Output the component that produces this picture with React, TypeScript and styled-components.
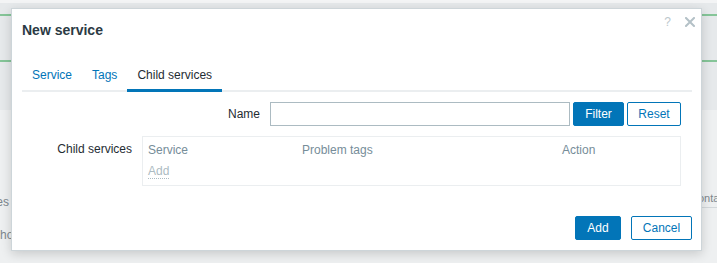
import React from "react";
import styled, { createGlobalStyle } from "styled-components";

const GlobalStyle = createGlobalStyle`
  html, body { margin: 0; padding: 0; }
  body {
    font-family: "Liberation Sans", Arial, sans-serif;
    font-size: 12px;
    color: #1f2c33;
    background: #eef0f1;
  }
  * { box-sizing: border-box; }
`;

const Page = styled.div`
  position: relative;
  width: 717px;
  height: 263px;
  overflow: hidden;
`;

/* ---------- dimmed page behind the dialog ---------- */
const Backdrop = styled.div`
  display: flex;
  flex-direction: column;
  width: 717px;
  height: 263px;
  background: #eef0f1;
`;

const TopStrip = styled.div`
  height: 3px;
  background: #f3f4f5;
`;

const Band = styled.div`
  height: 107px;
  background: #e6e9eb;
  display: flex;
  flex-direction: column;
  padding-top: 11px;
`;

const GreenRule = styled.div<{ $gap?: number }>`
  height: 2px;
  margin-top: ${(p) => p.$gap ?? 0}px;
  background: #85c598;
`;

const Lower = styled.div`
  display: grid;
  grid-template-columns: 1fr 27px;
  grid-template-rows: 20px 18px 20px;
  padding-top: 80px;
  color: #7d878d;
  font-size: 12px;
  line-height: 14px;
`;

const LeftText = styled.div<{ $shift: number; $top: number; $row: number }>`
  grid-column: 1;
  grid-row: ${(p) => p.$row};
  white-space: nowrap;
  margin-left: ${(p) => p.$shift}px;
  padding-top: ${(p) => p.$top}px;
`;

const RightText = styled.div`
  grid-column: 2;
  grid-row: 1;
  white-space: nowrap;
  font-size: 11px;
  padding-top: 1px;
  border-bottom: 1px solid #d3d8db;
  height: 18px;
`;

/* ---------- dialog ---------- */
const Dialog = styled.div`
  position: absolute;
  left: 11px;
  top: 8px;
  width: 691px;
  height: 243px;
  background: #ffffff;
  border: 1px solid #cdd5d9;
  box-shadow: 0 3px 10px rgba(0, 0, 0, 0.16);
  padding: 0 9px 0 10px;
  display: flex;
  flex-direction: column;
`;

const Head = styled.div`
  display: flex;
  justify-content: space-between;
  align-items: flex-start;
  padding-top: 8px;
`;

const Title = styled.h4`
  margin: 5px 0 0 0;
  font-size: 14px;
  line-height: 16px;
  font-weight: bold;
  color: #2b3a44;
`;

const HeadControls = styled.div`
  display: flex;
  align-items: center;
  gap: 14px;
  margin-right: -3px;
  height: 10px;
`;

const HelpMark = styled.span`
  font-size: 12px;
  line-height: 10px;
  color: #bcc7cc;
`;

const Tabs = styled.ul`
  list-style: none;
  margin: 23px 0 0 0;
  padding: 0;
  display: flex;
  border-bottom: 2px solid #ebeef0;
`;

const Tab = styled.li<{ $active?: boolean }>`
  padding: 7px 10px;
  line-height: 14px;
  margin-bottom: -2px;
  border-bottom: 3px solid ${(p) => (p.$active ? "#0275b8" : "transparent")};
  color: ${(p) => (p.$active ? "#1f2c33" : "#0275b8")};
`;

const FormGrid = styled.div`
  display: grid;
  grid-template-columns: 110px 539px;
  column-gap: 10px;
  row-gap: 10px;
  margin-top: 10px;
`;

const FilterRow = styled.div`
  grid-column: 2;
  display: flex;
  justify-content: flex-end;
  align-items: center;
  height: 24px;
`;

const Label = styled.label`
  line-height: 14px;
  color: #1f2c33;
  text-align: right;
`;

const FilterLabel = styled(Label)`
  margin-right: 10px;
`;

const RowLabel = styled(Label)`
  padding-top: 6px;
`;

const TextInput = styled.input`
  width: 300px;
  height: 24px;
  border: 1px solid #acbbc2;
  border-radius: 0;
  padding: 0 5px;
  font: inherit;
  margin-right: 3px;
  outline: none;
`;

const Button = styled.button<{ $alt?: boolean; $w: number }>`
  height: 24px;
  width: ${(p) => p.$w}px;
  padding: 0;
  font-family: inherit;
  font-size: 12px;
  border-radius: 2px;
  border: 1px solid #0275b8;
  background: ${(p) => (p.$alt ? "#ffffff" : "#0275b8")};
  color: ${(p) => (p.$alt ? "#0275b8" : "#ffffff")};
  cursor: pointer;
`;

const FilterButtons = styled.div`
  display: flex;
  gap: 3px;
`;

const TableBox = styled.div`
  border: 1px solid #ebeef0;
  padding: 6px 5px 6px;
  display: flex;
  flex-direction: column;
  gap: 7px;
`;

const HeaderRow = styled.div`
  display: grid;
  grid-template-columns: 154px 260px 1fr;
  line-height: 14px;
  color: #768d99;
`;

const AddLink = styled.span`
  align-self: flex-start;
  line-height: 14px;
  color: #acbbc2;
  border-bottom: 1px dotted #acbbc2;
`;

const Footer = styled.div`
  display: flex;
  justify-content: flex-end;
  gap: 10px;
  margin-top: 30px;
`;

const CloseIcon = () => (
  <svg width="10" height="10" viewBox="0 0 10 10">
    <path d="M1 1 L9 9 M9 1 L1 9" stroke="#b4c1c7" strokeWidth="2" strokeLinecap="square" />
  </svg>
);

export default function App() {
  return (
    <>
      <GlobalStyle />
      <Page>
        <Backdrop>
          <TopStrip />
          <Band>
            <GreenRule />
            <GreenRule $gap={44} />
          </Band>
          <Lower>
            <LeftText $shift={-37} $top={5} $row={1}>Services</LeftText>
            <RightText>Contact</RightText>
            <LeftText $shift={-8} $top={0} $row={3}>Show</LeftText>
          </Lower>
        </Backdrop>

        <Dialog>
          <Head>
            <Title>New service</Title>
            <HeadControls>
              <HelpMark>?</HelpMark>
              <CloseIcon />
            </HeadControls>
          </Head>

          <Tabs>
            <Tab>Service</Tab>
            <Tab>Tags</Tab>
            <Tab $active>Child services</Tab>
          </Tabs>

          <FormGrid>
            <FilterRow>
              <FilterLabel>Name</FilterLabel>
              <TextInput type="text" />
              <FilterButtons>
                <Button $w={51}>Filter</Button>
                <Button $w={54} $alt>Reset</Button>
              </FilterButtons>
            </FilterRow>

            <RowLabel>Child services</RowLabel>
            <TableBox>
              <HeaderRow>
                <span>Service</span>
                <span>Problem tags</span>
                <span>Action</span>
              </HeaderRow>
              <AddLink>Add</AddLink>
            </TableBox>
          </FormGrid>

          <Footer>
            <Button $w={46}>Add</Button>
            <Button $w={61} $alt>Cancel</Button>
          </Footer>
        </Dialog>
      </Page>
    </>
  );
}
